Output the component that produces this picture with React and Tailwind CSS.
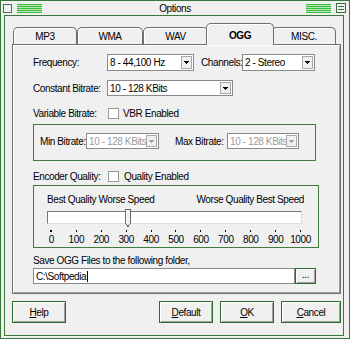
import React from "react";

function Stripes() {
  return (
    <svg width="25" height="9" viewBox="0 0 25 9" shapeRendering="crispEdges">
      <rect x="0" y="0" width="25" height="9" fill="#b8e8b8" />
      {[0, 2, 4, 6, 8].map((y) => (
        <rect key={y} x="0" y={y} width="25" height="1" fill="#3dbb3d" />
      ))}
    </svg>
  );
}

function MenuBox() {
  return (
    <svg width="10" height="10" viewBox="0 0 10 10" shapeRendering="crispEdges">
      <rect x="0.5" y="0.5" width="9" height="9" fill="#f0f0f0" stroke="#3d6d3d" />
      <rect x="2" y="3" width="6" height="1" fill="#3d6d3d" />
      <rect x="2" y="6" width="6" height="1" fill="#3d6d3d" />
    </svg>
  );
}

function Arrow({ color = "#000" }) {
  return (
    <svg width="5" height="3" viewBox="0 0 5 3" shapeRendering="crispEdges">
      <rect x="0" y="0" width="5" height="1" fill={color} />
      <rect x="1" y="1" width="3" height="1" fill={color} />
      <rect x="2" y="2" width="1" height="1" fill={color} />
    </svg>
  );
}

function Select({ className, text, disabled }) {
  return (
    <div
      className={
        "h-full bg-white border border-[#8a8a8a] flex items-center " + className
      }
    >
      <span
        className={
          "flex-1 pl-[2px] overflow-hidden whitespace-nowrap " +
          (disabled ? "text-[#9a9a9a]" : "text-black")
        }
      >
        {text}
      </span>
      <div className="w-[11px] h-[calc(100%-2px)] mr-[1px] bg-[#f0f0f0] border border-[#a8a8a8] flex items-center justify-center">
        <Arrow color={disabled ? "#a0a0a0" : "#000"} />
      </div>
    </div>
  );
}

function Checkbox() {
  return <div className="w-[11px] h-[11px] bg-white border border-[#9a9a9a]" />;
}

function Tab({ label }) {
  return (
    <div className="w-full h-[17px] border-t border-l border-r border-[#6f6f6f] rounded-t-[5px] shadow-[inset_1px_1px_0_#ffffff] flex items-center justify-center">
      {label}
    </div>
  );
}

function Btn({ className, children }) {
  return (
    <div
      className={
        "h-full border border-[#2f6b2f] shadow-[inset_1px_1px_0_#ffffff,inset_-1px_-1px_0_#a0a0a0] flex items-center justify-center " +
        className
      }
    >
      {children}
    </div>
  );
}

const ticks = ["0", "100", "200", "300", "400", "500", "600", "700", "800", "900", "1000"];

export default function App() {
  return (
    <div className="w-[350px] h-[339px] bg-[#f0f0f0] border border-[#3a753a] flex flex-col font-['Liberation_Sans',Arial,sans-serif] text-[10px] tracking-[-0.4px] leading-[13px] text-black overflow-hidden whitespace-nowrap">
      {/* Title bar */}
      <div className="h-[14px] grid grid-cols-[1fr_auto_1fr] items-center">
        <div className="flex items-center">
          <div className="w-[9px] h-[9px] ml-[2px] border border-[#4f6f4f]" />
          <div className="ml-[5px] flex">
            <Stripes />
          </div>
        </div>
        <div className="text-center">Options</div>
        <div className="flex items-center justify-end">
          <Stripes />
          <div className="ml-[5px] mr-[3px] flex">
            <MenuBox />
          </div>
        </div>
      </div>

      {/* Inner frame */}
      <div className="flex-1 ml-[3px] mr-[5px] mb-[2px] border border-[#3a753a] flex flex-col pl-[7px] pt-[7px]">
        {/* Tabs */}
        <div className="h-[21px] flex items-end pl-[1px]">
          <div className="w-[64px]">
            <Tab label="MP3" />
          </div>
          <div className="w-[66px]">
            <Tab label="WMA" />
          </div>
          <div className="w-[65px]">
            <Tab label="WAV" />
          </div>
          <div className="relative z-10 w-[68px] h-[22px] -mx-[2px] -mb-[1px] bg-[#f0f0f0] border-t border-l border-r border-[#6f6f6f] rounded-t-[5px] shadow-[inset_1px_1px_0_#ffffff] flex justify-center pt-[5px] font-bold">
            OGG
          </div>
          <div className="w-[64px]">
            <Tab label="MISC." />
          </div>
        </div>

        {/* Panel */}
        <div className="w-[329px] h-[250px] border border-[#6f6f6f] shadow-[inset_1px_1px_0_#ffffff,inset_-1px_-1px_0_#a0a0a0] flex flex-col pl-[20px]">
          <div className="mt-[9px] h-[17px] flex items-center">
            <div className="w-[74px]">Frequency:</div>
            <Select className="w-[87px]" text="8 - 44,100 Hz" />
            <div className="ml-[7px] w-[41px]">Channels:</div>
            <Select className="w-[73px]" text="2 - Stereo" />
          </div>

          <div className="mt-[9px] h-[16px] flex items-center">
            <div className="w-[74px]">Constant Bitrate:</div>
            <Select className="w-[126px]" text="10 - 128 KBits" />
          </div>

          <div className="mt-[11px] h-[13px] flex items-center">
            <div className="w-[75px]">Variable Bitrate:</div>
            <Checkbox />
            <div className="ml-[4px]">VBR Enabled</div>
          </div>

          <div className="mt-[4px] w-[283px] h-[37px] border border-[#3f7a3f] pl-[6px] pt-[8px]">
            <div className="h-[16px] flex items-center">
              <div className="w-[46px]">Min Bitrate:</div>
              <Select className="w-[73px]" text="10 - 128 KBits" disabled />
              <div className="ml-[16px] w-[52px]">Max Bitrate:</div>
              <Select className="w-[72px]" text="10 - 128 KBits" disabled />
            </div>
          </div>

          <div className="mt-[9px] h-[13px] flex items-center">
            <div className="w-[75px]">Encoder Quality:</div>
            <Checkbox />
            <div className="ml-[5px]">Quality Enabled</div>
          </div>

          <div className="mt-[2px] w-[286px] h-[63px] border border-[#3f7a3f] flex flex-col">
            <div className="mt-[7px] h-[13px] flex justify-between pl-[13px] pr-[14px]">
              <span>Best Quality Worse Speed</span>
              <span>Worse Quality Best Speed</span>
            </div>
            <div className="relative mt-[2px] ml-[11px] w-[258px] h-[20px]">
              <div className="ml-[2px] mt-[3px] w-[255px] h-[13px] bg-white border-t border-l border-t-[#7a7a7a] border-l-[#7a7a7a] border-r border-b border-r-[#dedede] border-b-[#dedede]" />
              <svg
                className="absolute left-[80px] top-[1px]"
                width="6"
                height="18"
                viewBox="0 0 6 18"
                shapeRendering="crispEdges"
              >
                <path d="M0.5 0.5 H5.5 V14 L3 17.5 L0.5 14 Z" fill="#f0f0f0" stroke="#6a6a6a" strokeWidth="1" />
                <rect x="1" y="1" width="1" height="13" fill="#ffffff" />
              </svg>
            </div>
            <div className="ml-[5px] w-[274px] h-[6px] grid grid-cols-11">
              {ticks.map((t, i) => (
                <div key={t} className="flex justify-center">
                  <div className={"mt-[2px] bg-black " + (i === 0 ? "w-[2px] h-[2px]" : "w-[1px] h-[2px]")} />
                </div>
              ))}
            </div>
            <div className="ml-[5px] w-[274px] h-[12px] grid grid-cols-11 leading-[12px]">
              {ticks.map((t) => (
                <div key={t} className="text-center">
                  {t}
                </div>
              ))}
            </div>
          </div>

          <div className="mt-[6px] h-[13px]">Save OGG Files to the following folder,</div>

          <div className="mt-[1px] h-[16px] flex">
            <div className="w-[262px] h-full bg-white border border-[#8a8a8a] flex items-center pl-[2px]">
              <span>C:\Softpedia</span>
              <span className="ml-[1px] w-[1px] h-[11px] bg-black" />
            </div>
            <div className="w-[21px] h-full border border-[#2f6b2f] shadow-[inset_1px_1px_0_#ffffff,inset_-1px_-1px_0_#a0a0a0] flex items-center justify-center leading-[8px] pb-[3px]">
              ...
            </div>
          </div>
        </div>

        {/* Buttons */}
        <div className="mt-[7px] h-[22px] w-[329px] flex">
          <Btn className="w-[54px]">
            <span>
              <u>H</u>elp
            </span>
          </Btn>
          <div className="flex-1" />
          <Btn className="w-[54px]">
            <span>
              <u>D</u>efault
            </span>
          </Btn>
          <Btn className="ml-[7px] w-[54px]">
            <span>
              <u>O</u>K
            </span>
          </Btn>
          <Btn className="ml-[7px] w-[60px]">
            <span>
              <u>C</u>ancel
            </span>
          </Btn>
        </div>
      </div>
    </div>
  );
}
